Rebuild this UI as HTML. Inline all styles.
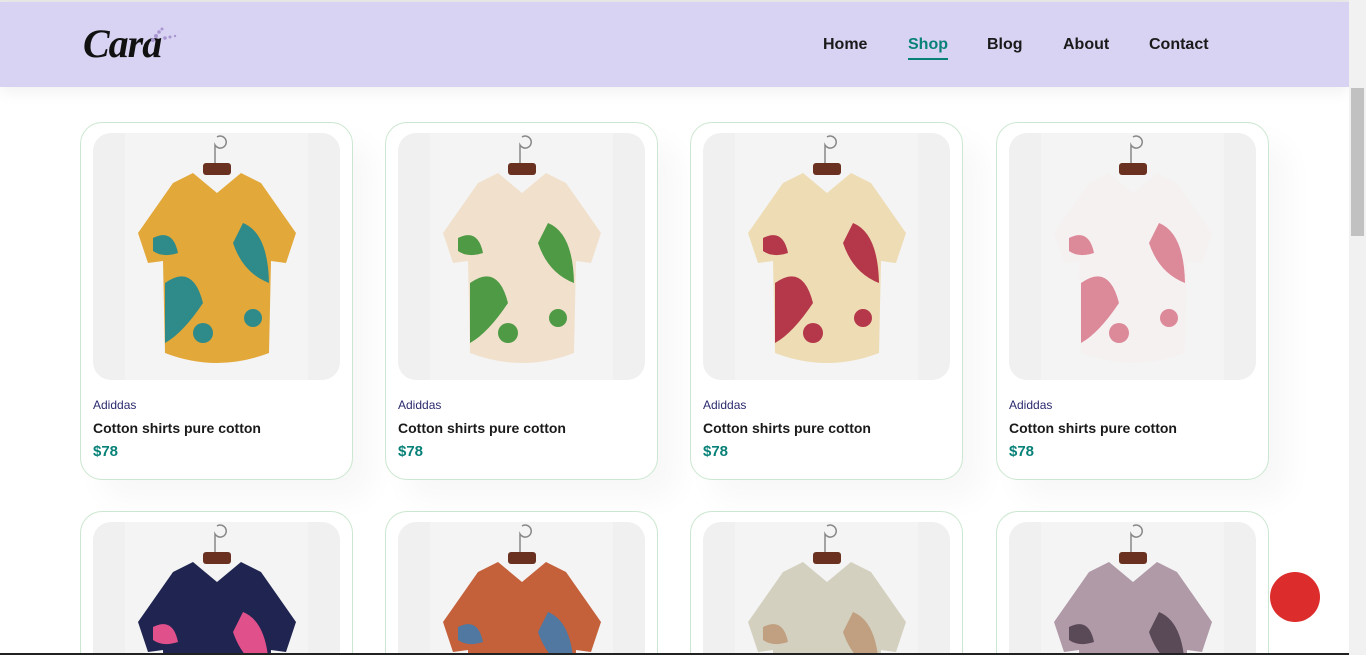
<!DOCTYPE html>
<html><head><style>
*{margin:0;padding:0;box-sizing:border-box}
html,body{width:1366px;height:655px;overflow:hidden;background:#fff;font-family:"Liberation Sans",Arial,sans-serif}
#wrap{position:relative;width:1366px;height:655px;overflow:hidden}
.top{position:absolute;left:0;top:0;width:1349px;height:2px;background:#e8e8e8}
header{position:absolute;left:0;top:2px;width:1349px;height:85px;background:#d8d3f3;box-shadow:0 5px 15px rgba(0,0,0,.06);z-index:2}
.logo{position:absolute;left:83px;top:18px;font-family:"Liberation Serif",serif;font-style:italic;font-weight:bold;font-size:40px;color:#111;letter-spacing:-1px}
nav a{position:absolute;top:34px;font-size:16px;font-weight:bold;color:#1a1a1a;text-decoration:none}
nav a.act{color:#088178}
nav a.act:after{content:"";position:absolute;left:0;right:0;top:22px;height:2px;background:#088178}
.card{position:absolute;width:273px;height:358px;border:1px solid #cce7d0;border-radius:22px;background:#fff;box-shadow:20px 20px 30px rgba(0,0,0,.03);overflow:hidden}
.card.r2{height:142px;border-bottom:none;border-radius:22px 22px 0 0;box-shadow:none}
.img{position:absolute;left:12px;top:10px;width:247px;height:247px;border-radius:18px;background:#f0f0f0;overflow:hidden}
.r2 .img{height:140px;border-radius:18px 18px 0 0}
.img .in{position:absolute;left:32px;top:0;width:183px;height:247px;background:#f4f4f4}
.img svg{position:absolute;left:0;top:0}
.b{position:absolute;left:12px;top:275px;font-size:12px;color:#2b2a6e}
.t{position:absolute;left:12px;top:297px;font-size:14px;font-weight:bold;color:#1a1a1a}
.p{position:absolute;left:12px;top:320px;font-size:15px;font-weight:bold;color:#088178}
.sb{position:absolute;left:1349px;top:0;width:17px;height:655px;background:#f1f1f1;z-index:3}
.sb i{position:absolute;left:2px;top:88px;width:13px;height:148px;background:#c1c1c1}
.bot{position:absolute;left:0;top:653px;width:1349px;height:2px;background:#222;z-index:3}
.fab{position:absolute;left:1270px;top:572px;width:50px;height:50px;border-radius:50%;background:#dc2c2c;z-index:3}
</style></head><body><div id="wrap">
<div class="top"></div>
<header><div class="logo">Cara</div>
<svg style="position:absolute;left:145px;top:22px" width="36" height="22"><g fill="#a995cf"><circle cx="8" cy="16" r="2"/><circle cx="11" cy="12" r="2"/><circle cx="14" cy="8" r="1.8"/><circle cx="17" cy="5" r="1.5"/><circle cx="20" cy="14" r="1.8"/><circle cx="25" cy="13" r="1.5"/><circle cx="30" cy="12" r="1.2"/></g></svg>
<nav><a style="left:823px">Home</a><a class="act" style="left:908px">Shop</a><a style="left:987px">Blog</a><a style="left:1063px">About</a><a style="left:1149px">Contact</a></nav>
</header>
<div id="cards"></div>
<div class="fab"></div>
<div class="bot"></div>
<div class="sb"><i></i></div>
</div>
<script>
const L=[80,385,690,996];
const cols=[["#e2a83a","#2f8a8a"],["#f1e1cc","#4f9a45"],["#eedcb4","#b4384a"],["#f6f1f1","#dc8a9a"]];
const cols2=[["#1f2550","#e0508a"],["#c4603a","#5078a0"],["#d4d0c0","#c0a080"],["#b09aa8","#5a4a58"]];
let h="";
function shirt(c){
 return `<svg width="247" height="247"><path d="M124 4 a6 6 0 1 1 -2 8 l0 20" stroke="#888" stroke-width="1.5" fill="none"/><rect x="110" y="30" width="28" height="12" rx="3" fill="#6a3020"/>
 <path d="M100 40 L80 50 L45 100 L55 130 L70 128 L72 220 Q124 240 176 220 L178 128 L193 130 L203 100 L168 50 L148 40 L124 60 Z" fill="${c[0]}"/>
 <path d="M72 150 Q100 130 110 170 Q90 200 72 210 Z M150 90 Q175 100 176 150 Q150 140 140 110 Z M60 105 Q80 95 85 120 Q70 125 60 118Z" fill="${c[1]}"/>
 <circle cx="110" cy="200" r="10" fill="${c[1]}"/><circle cx="160" cy="185" r="9" fill="${c[1]}"/></svg>`;
}
for(let r=0;r<2;r++)for(let i=0;i<4;i++){
 const c=r?cols2[i]:cols[i];
 if(r==0) h+=`<div class="card" style="left:${L[i]}px;top:122px"><div class="img"><div class="in"></div>${shirt(c)}</div><div class="b">Adiddas</div><div class="t">Cotton shirts pure cotton</div><div class="p">$78</div></div>`;
 else h+=`<div class="card r2" style="left:${L[i]}px;top:511px"><div class="img"><div class="in"></div>${shirt(c)}</div></div>`;
}
document.getElementById("cards").innerHTML=h;
</script>
</body></html>
